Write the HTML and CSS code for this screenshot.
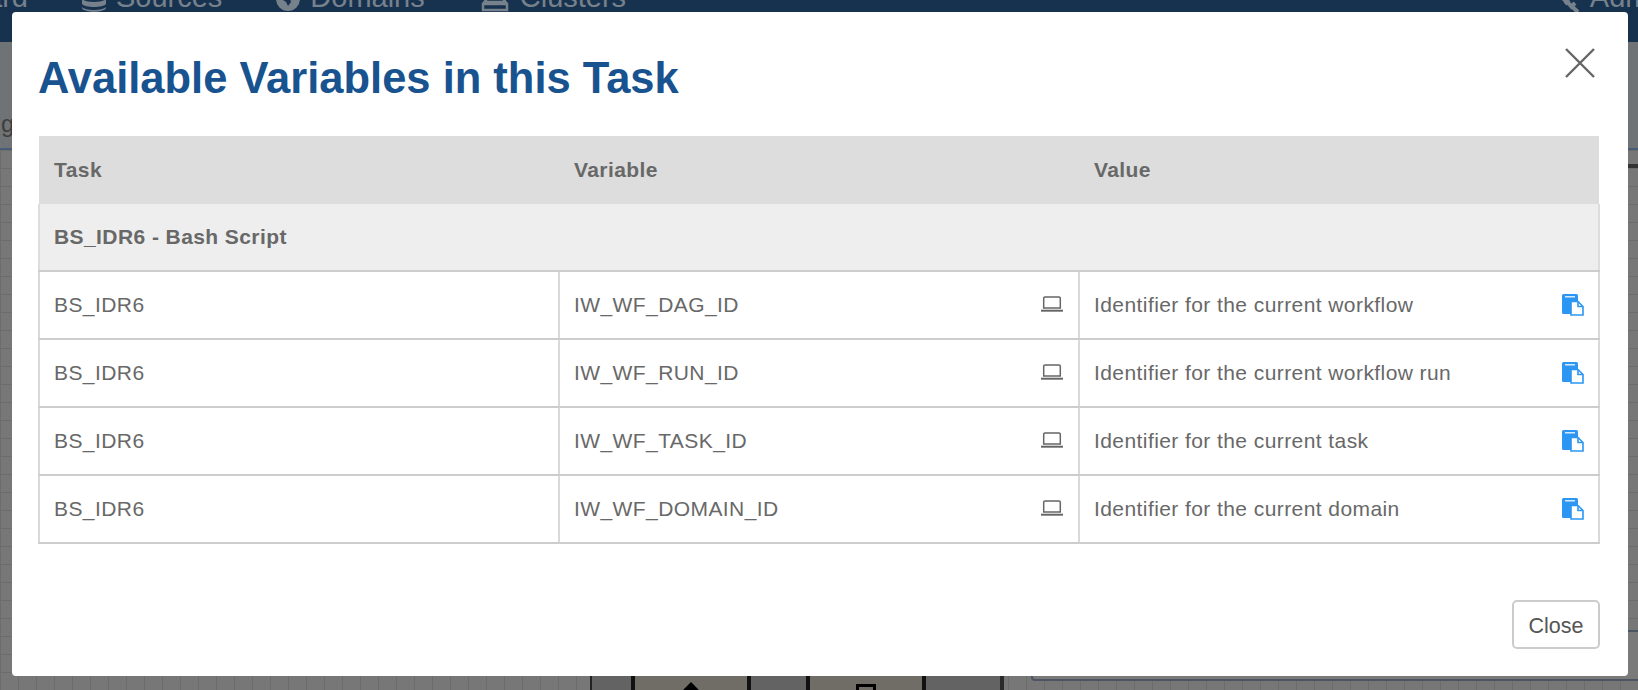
FILE: index.html
```html
<!DOCTYPE html>
<html lang="en">
<head>
<meta charset="utf-8">
<title>Available Variables in this Task</title>
<link rel="stylesheet" href="styles.css">
</head>
<body>
<div class="page">
  <nav class="nav">
    <span class="nav-item nav-first">ard</span>
    <span class="nav-item nav-sources">
      <svg class="nav-icon" viewBox="0 0 24 30"><ellipse cx="12" cy="5" rx="12" ry="5"/><path d="M0 9c3 4 21 4 24 0v5c-3 4-21 4-24 0zM0 17c3 4 21 4 24 0v5c-3 4-21 4-24 0zM0 25c3 4 21 4 24 0v1c-2 5-22 5-24 0z"/></svg>
      Sources</span>
    <span class="nav-item nav-domains">
      <svg class="nav-icon" viewBox="0 0 24 30"><circle cx="12" cy="17" r="12"/><path class="nav-cut" d="M9 14l5 2 1 4-3 4-2-4-3-2z"/></svg>
      Domains</span>
    <span class="nav-item nav-clusters">
      <svg class="nav-icon nav-icon-wide" viewBox="0 0 30 30"><path class="nav-line" d="M6 6h18v14H6zM11 12h13M11 6v12M3 22h24v6H3zM3 22l3-4M27 22l-3-4"/></svg>
      Clusters</span>
    <span class="nav-item nav-admin">
      <svg class="nav-icon" viewBox="0 0 24 30"><path class="nav-line nav-thick" d="M0 10l22 20M14 26l5-5M9 22l4-4"/></svg>
      Admin</span>
  </nav>
  <div class="subbar"><span class="subbar-text">g</span></div>
  <div class="canvas">
    <div class="canvas-dark"></div>
    <div class="right-bar"></div>
    <div class="tile tile-a"><span class="tile-mark"></span></div>
    <div class="tile tile-b"><span class="tile-doc"></span></div>
    <div class="side-panel"></div>
  </div>
</div>

<div class="modal">
  <header class="modal-head">
    <h1 class="modal-title">Available Variables in this Task</h1>
    <svg class="modal-x" viewBox="0 0 30 30"><path d="M1 1l28 28M29 1L1 29"/></svg>
  </header>
  <table class="vars">
    <thead>
      <tr class="row-head"><th>Task</th><th>Variable</th><th>Value</th></tr>
    </thead>
    <tbody>
      <tr class="row-group"><td colspan="3">BS_IDR6 - Bash Script</td></tr>
      <tr>
        <td>BS_IDR6</td>
        <td><div class="cell"><span>IW_WF_DAG_ID</span><svg class="ico-laptop" viewBox="0 0 24 16"><path class="lt" d="M3.7 12V2.2q0-1.2 1.2-1.2h14.2q1.2 0 1.2 1.200V12z"/><path class="lb" d="M1 14.700h22"/></svg></div></td>
        <td><div class="cell"><span>Identifier for the current workflow</span><svg class="ico-copy" viewBox="0 0 22 22"><path class="cb" d="M1.500 0h13a1.500 1.500 0 0 1 1.500 1.500V20H1.500A1.500 1.500 0 0 1 0 18.500V1.500A1.500 1.500 0 0 1 1.500 0z"/><path class="cw" d="M3 2h10v1.500H3z"/><path class="cf" d="M9 7.500h7l5 5v8.500H9z"/><path class="cs" d="M16 7.500v5h5"/></svg></div></td>
      </tr>
      <tr>
        <td>BS_IDR6</td>
        <td><div class="cell"><span>IW_WF_RUN_ID</span><svg class="ico-laptop" viewBox="0 0 24 16"><path class="lt" d="M3.7 12V2.2q0-1.2 1.2-1.2h14.2q1.2 0 1.2 1.200V12z"/><path class="lb" d="M1 14.700h22"/></svg></div></td>
        <td><div class="cell"><span>Identifier for the current workflow run</span><svg class="ico-copy" viewBox="0 0 22 22"><path class="cb" d="M1.500 0h13a1.500 1.500 0 0 1 1.500 1.500V20H1.500A1.500 1.500 0 0 1 0 18.500V1.500A1.500 1.500 0 0 1 1.500 0z"/><path class="cw" d="M3 2h10v1.500H3z"/><path class="cf" d="M9 7.500h7l5 5v8.500H9z"/><path class="cs" d="M16 7.500v5h5"/></svg></div></td>
      </tr>
      <tr>
        <td>BS_IDR6</td>
        <td><div class="cell"><span>IW_WF_TASK_ID</span><svg class="ico-laptop" viewBox="0 0 24 16"><path class="lt" d="M3.7 12V2.2q0-1.2 1.2-1.2h14.2q1.2 0 1.2 1.200V12z"/><path class="lb" d="M1 14.700h22"/></svg></div></td>
        <td><div class="cell"><span>Identifier for the current task</span><svg class="ico-copy" viewBox="0 0 22 22"><path class="cb" d="M1.500 0h13a1.500 1.500 0 0 1 1.500 1.500V20H1.500A1.500 1.500 0 0 1 0 18.500V1.500A1.500 1.500 0 0 1 1.500 0z"/><path class="cw" d="M3 2h10v1.500H3z"/><path class="cf" d="M9 7.500h7l5 5v8.500H9z"/><path class="cs" d="M16 7.500v5h5"/></svg></div></td>
      </tr>
      <tr>
        <td>BS_IDR6</td>
        <td><div class="cell"><span>IW_WF_DOMAIN_ID</span><svg class="ico-laptop" viewBox="0 0 24 16"><path class="lt" d="M3.7 12V2.2q0-1.2 1.2-1.2h14.2q1.2 0 1.2 1.200V12z"/><path class="lb" d="M1 14.700h22"/></svg></div></td>
        <td><div class="cell"><span>Identifier for the current domain</span><svg class="ico-copy" viewBox="0 0 22 22"><path class="cb" d="M1.500 0h13a1.500 1.500 0 0 1 1.500 1.500V20H1.500A1.500 1.500 0 0 1 0 18.500V1.500A1.500 1.500 0 0 1 1.500 0z"/><path class="cw" d="M3 2h10v1.500H3z"/><path class="cf" d="M9 7.500h7l5 5v8.500H9z"/><path class="cs" d="M16 7.500v5h5"/></svg></div></td>
      </tr>
    </tbody>
  </table>
  <footer class="modal-foot"><button class="btn-close" type="button">Close</button></footer>
</div>
</body>
</html>
```
FILE: styles.css
```css
* { box-sizing: border-box; }
html, body { margin: 0; height: 100%; overflow: hidden; }
body { font-family: "Liberation Sans", Arial, sans-serif; color: #666; background: #777; }

.page { height: 690px; display: flex; flex-direction: column; overflow: hidden; }

.nav {
  height: 42px; flex: none; background: #17324f; color: #77818c;
  display: flex; align-items: flex-start; overflow: hidden;
  font-size: 29px; line-height: 30px;
}
.nav-item { display: flex; align-items: center; gap: 10px; margin-top: -18px; }
.nav-first { margin-left: -14px; }
.nav-sources { margin-left: 54px; }
.nav-domains { margin-left: 54px; }
.nav-clusters { margin-left: 55px; }
.nav-admin { margin-left: auto; margin-right: -34px; }
.nav-icon { width: 24px; height: 30px; fill: currentColor; flex: none; }
.nav-icon-wide { width: 30px; }
.nav-cut { fill: #17324f; }
.nav-line { fill: none; stroke: currentColor; stroke-width: 2.5; }
.nav-thick { stroke-width: 4; }

.subbar { height: 108px; flex: none; background: #707376; border-bottom: 2px solid #475c78; overflow: hidden; }
.subbar-text { display: block; font-size: 24px; line-height: 24px; padding: 70px 0 0 1px; color: #3d3d3d; }

.canvas {
  flex: 1; position: relative;
  background-color: #777;
  background-image:
    linear-gradient(#6c6c6c 1px, transparent 1px),
    linear-gradient(90deg, #6c6c6c 1px, transparent 1px);
  background-size: 18px 18px;
}
.canvas-dark { position: absolute; left: 590px; top: 500px; width: 414px; height: 60px; background: #636363; border-left: 2px solid #222; border-right: 4px solid #2a2a2a; }
.right-bar { position: absolute; right: 0; top: 14px; width: 10px; height: 4px; background: #333; }
.tile { position: absolute; top: 505px; width: 120px; height: 40px; background: #706d66; border-left: 4px solid #111; border-right: 4px solid #111; border-radius: 8px 8px 0 0; display: flex; justify-content: center; }
.tile-a { left: 631px; }
.tile-b { left: 806px; }
.tile-mark { width: 14px; height: 14px; margin-top: 30px; background: #000; transform: rotate(45deg); }
.tile-doc { width: 20px; height: 14px; margin-top: 29px; border: 3px solid #000; border-bottom: 0; }
.side-panel { position: absolute; left: 1031px; top: 480px; right: -10px; height: 51px; background: #7a7a7a; border: 2px solid #4a5561; border-radius: 4px; }

.modal {
  position: absolute; left: 12px; top: 12px; width: 1616px; height: 664px;
  background: #fff; border-radius: 4px; padding: 0 28px 0 26px;
  display: flex; flex-direction: column;
}
.modal-head { height: 124px; flex: none; display: flex; justify-content: space-between; align-items: flex-start; }
.modal-title { margin: 41px 0 0; font-size: 43.5px; line-height: 50px; font-weight: 700; color: #18538f; }
.modal-x { width: 30px; height: 30px; margin: 36px 5px 0 0; fill: none; stroke: #666; stroke-width: 2.4; flex: none; }

.vars { width: 1562px; border-collapse: collapse; table-layout: fixed; font-size: 21px; letter-spacing: .42px; color: #686868; }
.vars th, .vars td { height: 68px; padding: 0 14px; text-align: left; vertical-align: middle; }
.vars th { background: #ddd; font-weight: 700; border: 0; padding-left: 15px; }
.vars td { border: 2px solid #d9d9d9; border-bottom-color: #cdcdcd; }
.vars .row-group td { height: 67px; background: #eee; font-weight: 700; border-top: 0; border-left-color: #ddd; border-right-color: #ddd; }

.cell { display: flex; justify-content: space-between; align-items: center; }
.ico-laptop { width: 24px; height: 16px; flex: none; fill: none; margin: -2px 0 0 0; }
.lt { stroke: #666; stroke-width: 1.5; }
.lb { stroke: #666; stroke-width: 2; }
.ico-copy { width: 22px; height: 22px; flex: none; margin-top: -1px; }
.cb { fill: #2d96f3; }
.cw { fill: #fff; opacity: .8; }
.cf { fill: #fff; stroke: #2d96f3; stroke-width: 1.6; }
.cs { fill: none; stroke: #2d96f3; stroke-width: 1.6; }

.modal-foot { flex: 1; display: flex; justify-content: flex-end; align-items: flex-end; padding-bottom: 27px; }
.btn-close {
  width: 88px; height: 49px; background: #fff; border: 2px solid #ccc; border-radius: 5px;
  font: 400 21.5px/47px "Liberation Sans", Arial, sans-serif; color: #555; padding: 1px 0 0;
}
```
